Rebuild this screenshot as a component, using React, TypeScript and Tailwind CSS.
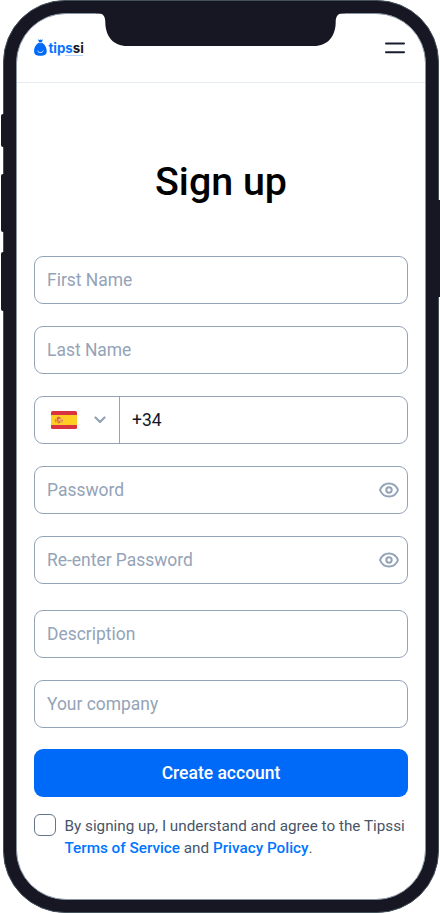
import type { ReactNode } from "react";

function Logo() {
  return (
    <div className="relative flex h-[20px] w-[50px] items-center">
      <svg className="h-[18px] w-[13px] shrink-0" viewBox="0 0 13 18" fill="none">
        <path
          d="M4 0.2 L5.4 1 L6.6 0.5 L7.8 1 L9 0.2 L7.7 3.6 C10.4 5 12.7 8.5 12.7 12 C12.7 15.8 10.6 16.8 6.4 16.8 C2.2 16.8 0.1 15.8 0.1 12 C0.1 8.5 2.4 5 5.1 3.6 Z"
          fill="#006af8"
        />
        <path d="M4.4 3.7 H8.6" stroke="#fff" strokeWidth="0.7" />
        <path d="M3.6 12 C4.6 14.2 8.2 14.2 9.2 12" stroke="#fff" strokeWidth="0.9" strokeLinecap="round" />
      </svg>
      <span className="ml-[2px] font-[Inter,sans-serif] text-[13.3px] leading-[16px] font-bold tracking-normal text-[#0a73ff]">
        tips<span className="text-[#171723]">si</span>
      </span>
      <span className="absolute top-[17px] left-[31px] h-[1px] w-[18px] bg-[#b5d4ff]" />
    </div>
  );
}

function Flag() {
  return (
    <svg className="h-[18px] w-[26px]" viewBox="0 0 26 18">
      <clipPath id="flag-shape">
        <rect width="26" height="18" rx="1.5" />
      </clipPath>
      <g clipPath="url(#flag-shape)">
        <rect width="26" height="18" fill="#d93340" />
        <rect y="4" width="26" height="10" fill="#ffce24" />
        <path d="M4 7.5h1V12H4zM10.5 7.5h1V12h-1z" fill="#e8a06c" />
        <path d="M5.7 6.6 7.6 5.4l2 1.2v4.8L7.7 12.6l-2-1.2z" fill="#dc6a46" />
        <path d="M7.7 8h1.8v2H7.7z" fill="#e9c3a5" />
        <path d="M6 10h1.6v1.7H6z" fill="#f29b2f" />
        <path d="M3.8 9.7h1.5M10.2 9.7h1.6" stroke="#cf4948" strokeWidth=".8" />
      </g>
    </svg>
  );
}

function Eye() {
  return (
    <svg className="h-[16px] w-[20px]" viewBox="0 0 20 16" fill="none" stroke="#94a3b8" strokeWidth="2">
      <path d="M1 8 C2.7 3.7 6.1 1.4 10 1.4 S17.3 3.7 19 8 C17.3 12.3 13.9 14.6 10 14.6 S2.7 12.3 1 8 Z" strokeLinejoin="round" />
      <circle cx="10" cy="8" r="2.7" />
    </svg>
  );
}

function Field({ label, children }: { label: string; children?: ReactNode }) {
  return (
    <div className="flex h-[48px] shrink-0 items-center justify-between rounded-[9px] border border-[#94a3b8] pr-[8px] pl-[12px] text-[17.45px] text-[#94a3b8]">
      <span>{label}</span>
      {children}
    </div>
  );
}

export default function App() {
  return (
    <div className="relative h-[913px] w-[440px] overflow-hidden bg-white pl-[3px] font-['Roboto',sans-serif]">
      <div className="absolute top-[114px] left-[1px] h-[33px] w-[4px] rounded-l-[2px] bg-[#171723]" />
      <div className="absolute top-[174px] left-[1px] h-[58px] w-[4px] rounded-l-[2px] bg-[#171723]" />
      <div className="absolute top-[252px] left-[1px] h-[59px] w-[4px] rounded-l-[2px] bg-[#171723]" />
      <div className="absolute top-[200px] left-[437px] h-[97px] w-[3px] bg-[#171723]" />
      <div className="h-[913px] w-[436px] rounded-[62px] border border-[#43515a] bg-[#171723] p-[12px]">
        <div className="flex h-[887px] w-[410px] flex-col overflow-hidden rounded-[50px] border border-[#8795a3] bg-white">
          <header className="flex h-[69px] shrink-0 items-center justify-between border-b border-[#e6ebf5] pr-[20px] pl-[16.5px]">
            <Logo />
            <svg className="h-[12px] w-[20px]" viewBox="0 0 20 12" fill="none">
              <path d="M1 1.5H19M1 10.3H19" stroke="#171d30" strokeWidth="2" strokeLinecap="round" />
            </svg>
          </header>
          <main className="flex flex-col px-[17px]">
            <h1 className="mt-[74px] text-center text-[39.4px] leading-[50px] font-medium text-black">Sign up</h1>
            <form className="mt-[49px] flex flex-col">
              <div className="flex flex-col gap-[22px]">
                <Field label="First Name" />
                <Field label="Last Name" />
                <div className="flex h-[48px] rounded-[9px] border border-[#94a3b8] text-[17.45px] text-[#0f172a]">
                  <div className="flex w-[85px] items-center border-r border-[#94a3b8] pl-[16px]">
                    <Flag />
                    <svg className="ml-[17px] h-[8px] w-[12px]" viewBox="0 0 12 8" fill="none">
                      <path d="M1.5 1.5 6 6 10.5 1.5" stroke="#94a3b8" strokeWidth="2.2" strokeLinecap="round" strokeLinejoin="round" />
                    </svg>
                  </div>
                  <span className="flex items-center pl-[12px]">+34</span>
                </div>
                <Field label="Password"><Eye /></Field>
                <Field label="Re-enter Password"><Eye /></Field>
              </div>
              <div className="mt-[26px] flex flex-col gap-[22px]">
                <Field label="Description" />
                <Field label="Your company" />
              </div>
              <button type="button" className="mt-[21px] h-[48px] rounded-[9px] bg-[#006af8] text-[17.5px] font-medium text-white">
                Create account
              </button>
              <div className="mt-[17px] flex">
                <span className="h-[22px] w-[22px] shrink-0 rounded-[6px] border border-[#64748b]" />
                <p className="mt-[1px] ml-[8.5px] text-[15.28px] leading-[22px] whitespace-nowrap text-[#475569]">
                  By signing up, I understand and agree to the Tipssi
                  <br />
                  <span className="font-medium text-[#0075ff]">Terms of Service</span> and{" "}
                  <span className="font-medium text-[#0075ff]">Privacy Policy</span>.
                </p>
              </div>
            </form>
          </main>
        </div>
      </div>
      <svg className="absolute top-[12px] left-[96px] h-[35px] w-[249px]" viewBox="0 0 249 35">
        <path
          d="M0 0 V1.2 H2 C7 1.2 9.3 4 9.3 10 C9.3 24.5 17.5 34 31 34 H218 C231.5 34 239.7 24.5 239.7 10 C239.7 4 242 1.2 247 1.2 H249 V0 Z"
          fill="#171723"
        />
      </svg>
    </div>
  );
}
